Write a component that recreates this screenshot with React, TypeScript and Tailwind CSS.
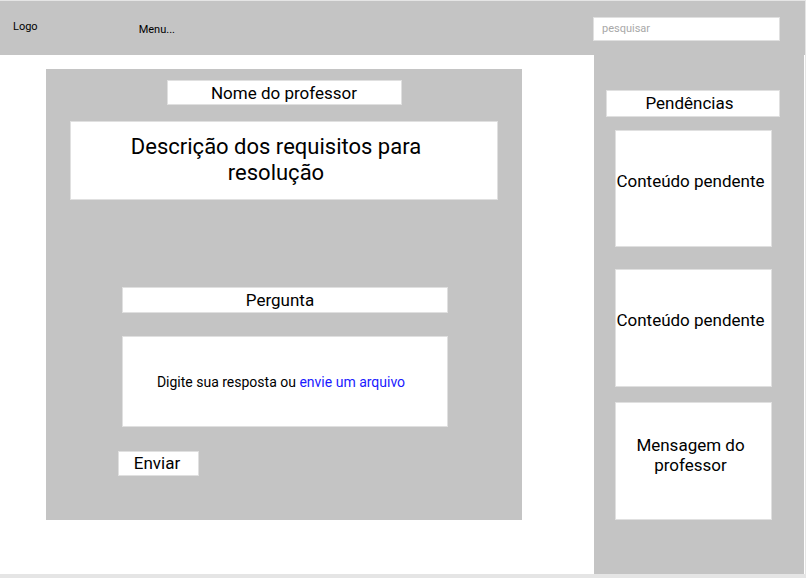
export default function App() {
  return (
    <div
      className="w-[806px] h-[578px] bg-white border-t border-r border-b-4 border-[#e5e5e5] flex flex-col text-black"
      style={{ fontFamily: 'Roboto, "Liberation Sans", sans-serif' }}
    >
      <header className="h-[54px] shrink-0 bg-[#c4c4c4] flex items-start">
        <span className="ml-[13px] mt-[18px] text-[11px]">Logo</span>
        <span className="ml-[101px] mt-[21px] text-[11px]">Menu...</span>
        <div className="ml-auto mr-[25px] mt-[16px] w-[187px] h-[24px] bg-white border border-[#e0e0e0] flex items-center pl-[8px] text-[11px] text-[#a8a8a8]">
          pesquisar
        </div>
      </header>

      <div className="flex flex-1">
        <div className="w-[594px] shrink-0">
          <main className="ml-[46px] mt-[14px] w-[476px] h-[451px] bg-[#c4c4c4] flex flex-col items-center">
            <div className="mt-[11px] w-[235px] h-[25px] bg-white border border-[#e0e0e0] flex items-center justify-center pt-[2px] text-[17px]">
              Nome do professor
            </div>
            <div className="mt-[16px] w-[428px] h-[79px] bg-white border border-[#e0e0e0] flex justify-center pt-[12px] pr-[16px] text-[22px] leading-[26px] text-center">
              Descrição dos requisitos para
              <br />
              resolução
            </div>
            <div className="mt-[87px] ml-[1px] w-[326px] h-[26px] bg-white border border-[#e0e0e0] flex items-center justify-center pt-[2px] pr-[9px] text-[17px]">
              Pergunta
            </div>
            <div className="mt-[23px] ml-[1px] w-[326px] h-[91px] bg-white border border-[#e0e0e0] flex items-center justify-center pt-[2px] pr-[7px] text-[14px]">
              Digite sua resposta ou&nbsp;
              <span className="text-[#1a1aff]">envie um arquivo</span>
            </div>
            <div className="self-start ml-[72px] mt-[24px] w-[81px] h-[25px] bg-white border border-[#e0e0e0] flex items-center justify-center pr-[3px] text-[17px]">
              Enviar
            </div>
          </main>
        </div>

        <aside className="w-[210px] shrink-0 bg-[#c4c4c4] flex flex-col">
          <div className="ml-[12px] mt-[35px] w-[174px] h-[27px] bg-white border border-[#e0e0e0] flex items-center justify-center pr-[7px] text-[17px]">
            Pendências
          </div>
          <div className="ml-[21px] mt-[13px] w-[157px] h-[117px] bg-white border border-[#e0e0e0] flex items-center justify-center pb-[13px] pr-[6px] text-[17px]">
            Conteúdo pendente
          </div>
          <div className="ml-[21px] mt-[22px] w-[157px] h-[118px] bg-white border border-[#e0e0e0] flex items-center justify-center pb-[14px] pr-[6px] text-[17px]">
            Conteúdo pendente
          </div>
          <div className="ml-[21px] mt-[15px] w-[157px] h-[118px] bg-white border border-[#e0e0e0] flex items-center justify-center text-center text-[17px] leading-[20px] pb-[12px] pr-[6px]">
            Mensagem do
            <br />
            professor
          </div>
        </aside>
      </div>
    </div>
  )
}
